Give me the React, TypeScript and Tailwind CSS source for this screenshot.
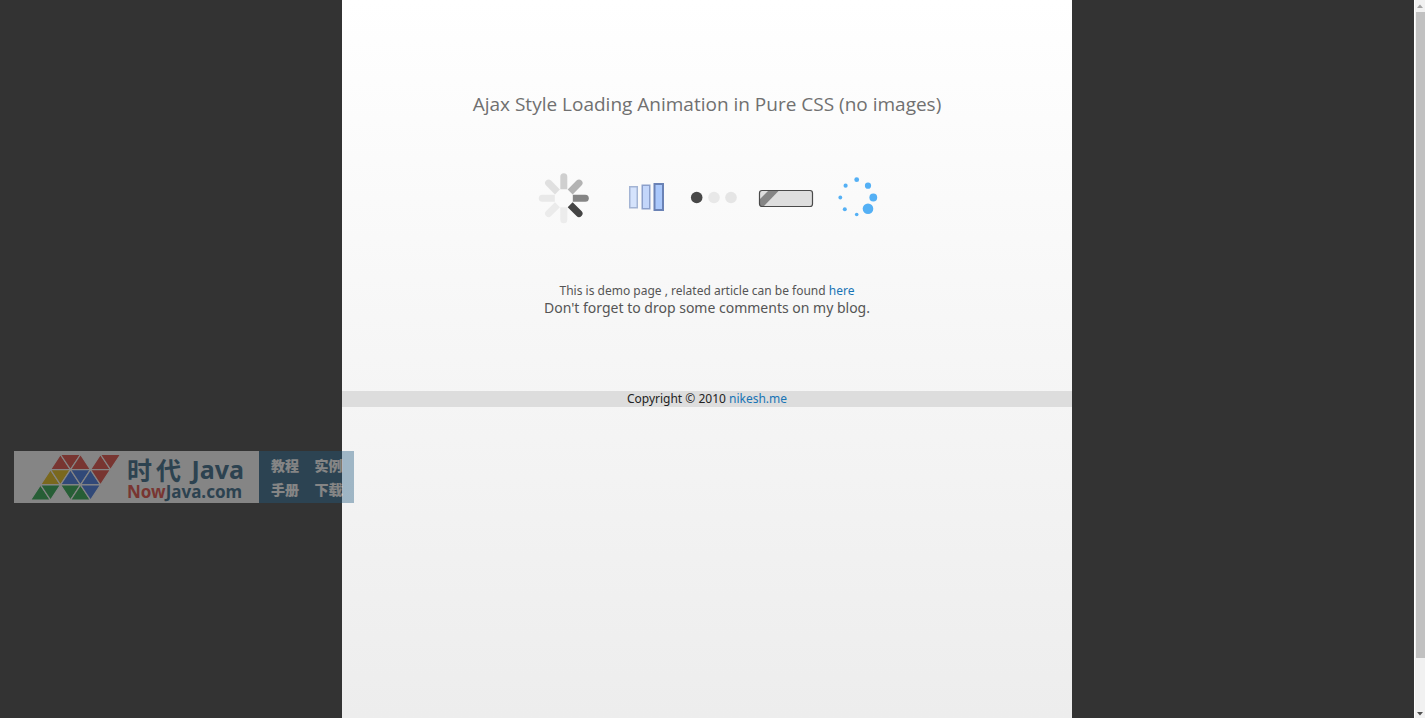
const spokes = ["#cfcfcf", "#b3b3b3", "#858585", "#444444", "#ececec", "#ebebeb", "#e9e9e9", "#e0e0e0"];

const orbitDots = [
  { x: 22.7, y: 7.7, r: 2.4 },
  { x: 34, y: 13.7, r: 3.1 },
  { x: 39.3, y: 25.5, r: 3.9 },
  { x: 34, y: 36.8, r: 5.3 },
  { x: 22.7, y: 42.5, r: 1.8 },
  { x: 10.8, y: 37.3, r: 2 },
  { x: 6.3, y: 25.5, r: 1.9 },
  { x: 11.6, y: 13.7, r: 2.1 },
];

const RED = "#e03a30";
const YELLOW = "#e5b800";
const BLUE = "#2f6be0";
const GREEN = "#16a03c";

// row, column and direction of each triangle in the logo lattice
const tiles: { row: number; col: number; up: boolean; fill: string }[] = [
  { row: 0, col: 0, up: true, fill: RED },
  { row: 0, col: 0, up: false, fill: RED },
  { row: 0, col: 1, up: true, fill: RED },
  { row: 0, col: 2, up: true, fill: RED },
  { row: 0, col: 2, up: false, fill: RED },
  { row: 1, col: 0, up: true, fill: YELLOW },
  { row: 1, col: 0, up: false, fill: YELLOW },
  { row: 1, col: 1, up: true, fill: BLUE },
  { row: 1, col: 1, up: false, fill: BLUE },
  { row: 1, col: 2, up: true, fill: BLUE },
  { row: 1, col: 2, up: false, fill: RED },
  { row: 2, col: 0, up: true, fill: GREEN },
  { row: 2, col: 0, up: false, fill: GREEN },
  { row: 2, col: 1, up: false, fill: GREEN },
  { row: 2, col: 2, up: true, fill: GREEN },
  { row: 2, col: 2, up: false, fill: BLUE },
];

function tilePoints(row: number, col: number, up: boolean) {
  const half = 10;
  const height = 15.2;
  const x = 46.5 - half * row + half * 2 * col;
  const top = 3.5 + height * row;
  const bottom = top + height;
  return up
    ? `${x},${top} ${x + half},${bottom} ${x - half},${bottom}`
    : `${x},${top} ${x + half * 2},${top} ${x + half},${bottom}`;
}

function Loaders() {
  return (
    <div className="flex justify-center gap-5">
      <svg width="68" height="52" viewBox="0 0 68 52" aria-label="Spinner">
        {spokes.map((fill, i) => (
          <path
            key={i}
            d="M-3.5 -9 V-21.5 A3.5 3.5 0 0 1 3.5 -21.5 V-9 Z"
            fill={fill}
            transform={`translate(27.8 26.3) rotate(${i * 45})`}
          />
        ))}
      </svg>
      <svg width="46" height="52" viewBox="0 0 46 52" aria-label="Bars">
        <rect x="5.75" y="14.75" width="7.5" height="21" fill="#d5e3fc" stroke="#a3b4d4" strokeWidth="1.5" />
        <rect x="18.25" y="13.25" width="7.5" height="23.5" fill="#c3d6fa" stroke="#8b9fca" strokeWidth="1.5" />
        <rect x="30.5" y="12" width="8.5" height="26" fill="#aac8fb" stroke="#6a82b5" strokeWidth="2" />
      </svg>
      <svg width="48" height="52" viewBox="0 0 48 52" aria-label="Dots">
        <circle cx="6.7" cy="25.5" r="5.8" fill="#484848" />
        <circle cx="24" cy="25.5" r="5.8" fill="#e8e8e8" />
        <circle cx="41" cy="25.5" r="5.8" fill="#e5e5e5" />
      </svg>
      <svg width="56" height="52" viewBox="0 0 56 52" aria-label="Progress bar">
        <rect x="1.5" y="18.5" width="53" height="16" rx="2.5" fill="#dedede" />
        <path d="M10 19 H20.5 L6 34 H2 V27 Z" fill="#858585" />
        <rect x="1.5" y="18.5" width="53" height="16" rx="2.5" fill="none" stroke="#4a4a4a" strokeWidth="1.2" />
      </svg>
      <svg width="44" height="52" viewBox="0 0 44 52" aria-label="Circle">
        {orbitDots.map((dot, i) => (
          <circle key={i} cx={dot.x} cy={dot.y} r={dot.r} fill="#54b0f5" />
        ))}
      </svg>
    </div>
  );
}

function Watermark() {
  return (
    <div className="absolute left-[14px] top-[451px] flex h-[52px] w-[340px] opacity-40">
      <div className="flex w-[245px] shrink-0 bg-white pl-4">
        <svg width="97" height="52" viewBox="16 0 97 52" aria-hidden="true">
          {tiles.map((tile) => (
            <polygon
              key={`${tile.row}-${tile.col}-${tile.up}`}
              points={tilePoints(tile.row, tile.col, tile.up)}
              fill={tile.fill}
              stroke="#ffffff"
              strokeWidth="1.2"
            />
          ))}
        </svg>
        <div className="flex w-[117px] flex-col whitespace-nowrap pt-1 font-bold text-[#23597c]">
          <div className="flex items-center justify-between text-[25px] leading-7">
            <span className="flex gap-1 font-['Noto_Sans_CJK_SC',sans-serif]">
              <span>时</span>
              <span>代</span>
            </span>
            <span>Java</span>
          </div>
          <p className="text-[17px] leading-[18px]">
            <span className="text-[#e03a30]">Now</span>Java.com
          </p>
        </div>
      </div>
      <div className="grid grow grid-cols-2 content-center gap-x-3 bg-[#235c82] pl-3 pr-2 font-['Noto_Sans_CJK_SC',sans-serif] text-[14px] font-black leading-6 text-white">
        <span>教程</span>
        <span>实例</span>
        <span>手册</span>
        <span>下载</span>
      </div>
    </div>
  );
}

function Scrollbar() {
  return (
    <div className="flex w-[11px] shrink-0 flex-col items-center border-l border-white bg-[#f1f1f1]" aria-hidden="true">
      <svg width="6" height="12" viewBox="0 0 6 12">
        <path d="M0 8 L3 4.5 L6 8 Z" fill="#a3a3a3" />
      </svg>
      <div className="h-[90%] w-[9px] bg-[#c1c1c1]" />
      <svg width="6" height="12" viewBox="0 0 6 12" className="mt-auto">
        <path d="M0 6 L3 9.5 L6 6 Z" fill="#505050" />
      </svg>
    </div>
  );
}

export default function App() {
  return (
    <div className="relative flex h-screen overflow-hidden bg-[#333333] font-['Noto_Sans','Open_Sans',sans-serif]">
      <div className="flex min-w-0 grow justify-center">
        <main className="w-full max-w-[730px] bg-linear-to-b from-white to-[#ededed] text-center">
          <h1 className="pt-[88px] font-['Open_Sans','Noto_Sans',sans-serif] text-[19px] leading-8 text-[#707070]">
            Ajax Style Loading Animation in Pure CSS (no images)
          </h1>
          <div className="pt-[52px]">
            <Loaders />
          </div>
          <div className="pt-[59px] text-[#555555]">
            <p className="text-[12px] leading-4">
              This is demo page , related article can be found{" "}
              <a href="#article" className="text-[#1774b5]">
                here
              </a>
            </p>
            <p className="text-[14px] leading-[18px]">Don't forget to drop some comments on my blog.</p>
          </div>
          <footer className="mt-[74px] bg-[#dddddd] text-[12px] leading-4 text-[#222222]">
            Copyright © 2010{" "}
            <a href="#nikesh" className="text-[#1774b5]">
              nikesh.me
            </a>
          </footer>
        </main>
      </div>
      <Scrollbar />
      <Watermark />
    </div>
  );
}
